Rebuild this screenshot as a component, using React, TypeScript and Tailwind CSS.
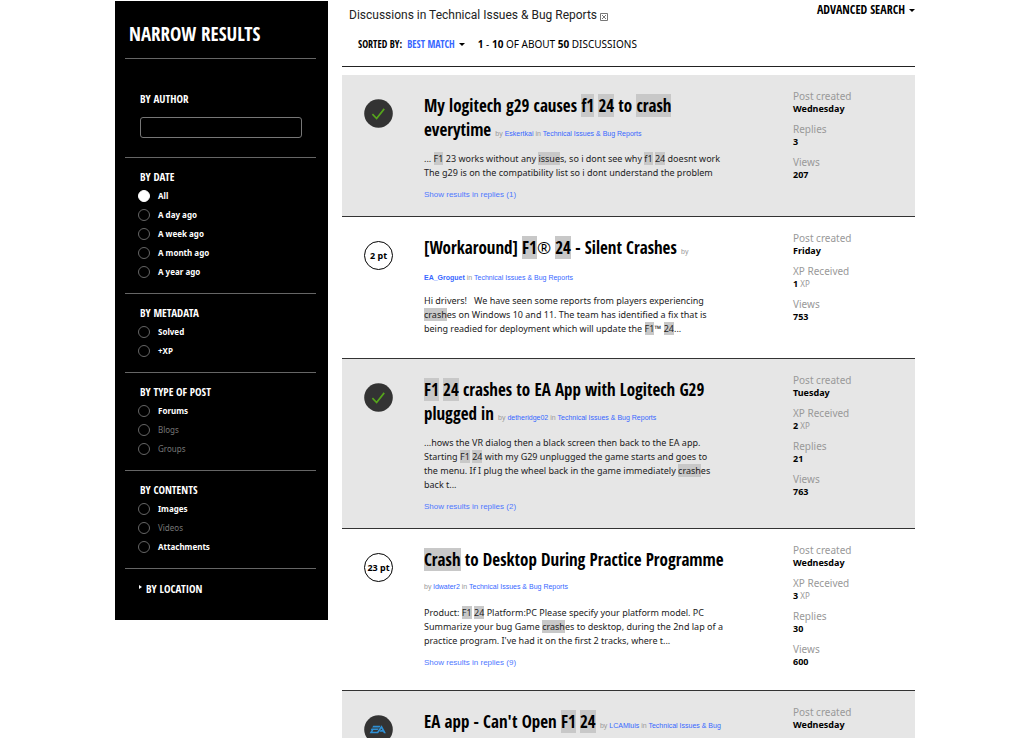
import type { ReactNode } from "react";

type Option = { label: string; disabled?: boolean; checked?: boolean };
type Filter = { title: string; name: string; options: Option[] };
type Stat = { label: string; value: string; unit?: string };
type Result = {
  id: number;
  badge: ReactNode;
  title: ReactNode;
  titleBreak?: boolean;
  byBreak?: boolean;
  author: string;
  staff?: boolean;
  board: string;
  excerpt?: ReactNode;
  replies?: number;
  stats: Stat[];
};

const filters: Filter[] = [
  {
    title: "By date",
    name: "date",
    options: [
      { label: "All", checked: true },
      { label: "A day ago" },
      { label: "A week ago" },
      { label: "A month ago" },
      { label: "A year ago" },
    ],
  },
  { title: "By metadata", name: "metadata", options: [{ label: "Solved" }, { label: "+XP" }] },
  {
    title: "By type of post",
    name: "type",
    options: [{ label: "Forums" }, { label: "Blogs", disabled: true }, { label: "Groups", disabled: true }],
  },
  {
    title: "By contents",
    name: "contents",
    options: [{ label: "Images" }, { label: "Videos", disabled: true }, { label: "Attachments" }],
  },
];

function Hit({ children }: { children: ReactNode }) {
  return <mark className="bg-[#c8c8c8] text-inherit">{children}</mark>;
}

function SolvedBadge() {
  return (
    <svg viewBox="0 0 29 29" className="size-[29px]" role="img" aria-label="Solved">
      <circle cx="14.5" cy="14.5" r="14.3" fill="#333" />
      <path d="M8.4 15.2l4.2 4.3 7.6-9.6" fill="none" stroke="#56a51c" strokeWidth="1.7" />
    </svg>
  );
}

function PointBadge({ points }: { points: number }) {
  return (
    <span className="flex size-[29px] items-center justify-center rounded-full border border-black bg-white text-[9px] font-bold whitespace-nowrap">
      {points} pt
    </span>
  );
}

function EaBadge() {
  return (
    <svg viewBox="0 0 29 29" className="size-[29px]" role="img" aria-label="EA">
      <circle cx="14.5" cy="14.5" r="14.3" fill="#333" />
      <path
        d="M9.2 10.8h7.3l-1 1.6H8.2zM7.5 13.5h7.2l-1 1.6H9.4l-1 1.6h4.8l4.4-6.4 4.3 8h-2l-.8-1.6h-3.5l1-1.6h1.6l-.8-1.5-3.3 4.7H5.6l2-3.2h-.8z"
        fill="#2f8fd3"
      />
    </svg>
  );
}

const board = "Technical Issues & Bug Reports";

const results: Result[] = [
  {
    id: 1,
    badge: <SolvedBadge />,
    title: <>My logitech g29 causes <Hit>f1</Hit> <Hit>24</Hit> to <Hit>crash</Hit><br />everytime</>,
    author: "Eskertkai",
    board,
    excerpt: (
      <>
        ... <Hit>F1</Hit> 23 works without any <Hit>issue</Hit>s, so i dont see why <Hit>f1</Hit> <Hit>24</Hit> doesnt work<br />
        The g29 is on the compatibility list so i dont understand the problem
      </>
    ),
    replies: 1,
    stats: [
      { label: "Post created", value: "Wednesday" },
      { label: "Replies", value: "3" },
      { label: "Views", value: "207" },
    ],
  },
  {
    id: 2,
    badge: <PointBadge points={2} />,
    title: <>[Workaround] <Hit>F1</Hit><span className="font-['Open_Sans','Liberation_Sans',sans-serif] font-normal">®</span> <Hit>24</Hit> - Silent Crashes</>,
    byBreak: true,
    author: "EA_Groguet",
    staff: true,
    board,
    excerpt: (
      <>
        Hi drivers! &nbsp; We have seen some reports from players experiencing<br />
        <Hit>crash</Hit>es on Windows 10 and 11. The team has identified a fix that is<br />
        being readied for deployment which will update the <Hit>F1</Hit>™ <Hit>24</Hit>...
      </>
    ),
    stats: [
      { label: "Post created", value: "Friday" },
      { label: "XP Received", value: "1", unit: "XP" },
      { label: "Views", value: "753" },
    ],
  },
  {
    id: 3,
    badge: <SolvedBadge />,
    title: <><Hit>F1</Hit> <Hit>24</Hit> crashes to EA App with Logitech G29<br />plugged in</>,
    author: "detheridge02",
    board,
    excerpt: (
      <>
        ...hows the VR dialog then a black screen then back to the EA app.<br />
        Starting <Hit>F1</Hit> <Hit>24</Hit> with my G29 unplugged the game starts and goes to<br />
        the menu. If I plug the wheel back in the game immediately <Hit>crash</Hit>es<br />
        back t...
      </>
    ),
    replies: 2,
    stats: [
      { label: "Post created", value: "Tuesday" },
      { label: "XP Received", value: "2", unit: "XP" },
      { label: "Replies", value: "21" },
      { label: "Views", value: "763" },
    ],
  },
  {
    id: 4,
    badge: <PointBadge points={23} />,
    title: <><Hit>Crash</Hit> to Desktop During Practice Programme</>,
    titleBreak: true,
    author: "ldwater2",
    board,
    excerpt: (
      <>
        Product: <Hit>F1</Hit> <Hit>24</Hit> Platform:PC Please specify your platform model. PC<br />
        Summarize your bug Game <Hit>crash</Hit>es to desktop, during the 2nd lap of a<br />
        practice program. I've had it on the first 2 tracks, where t...
      </>
    ),
    replies: 9,
    stats: [
      { label: "Post created", value: "Wednesday" },
      { label: "XP Received", value: "3", unit: "XP" },
      { label: "Replies", value: "30" },
      { label: "Views", value: "600" },
    ],
  },
  {
    id: 5,
    badge: <EaBadge />,
    title: <>EA app - Can't Open <Hit>F1</Hit> <Hit>24</Hit></>,
    author: "LCAMluis",
    board: "Technical Issues & Bug",
    stats: [{ label: "Post created", value: "Wednesday" }],
  },
];

function Caret() {
  return <span className="border-x-[3px] border-t-[3px] border-x-transparent border-t-black" />;
}

function FilterHeading({ children }: { children: ReactNode }) {
  return (
    <h3 className="font-['Open_Sans_Condensed','Liberation_Sans',sans-serif] text-[11px] leading-[18px] font-bold uppercase">
      {children}
    </h3>
  );
}

function Sidebar() {
  return (
    <aside className="mt-px w-[213px] shrink-0 self-start bg-black pr-[12px] pl-[10px] text-white">
      <h2 className="border-b border-[#666] pt-[18px] pb-[9px] pl-1 font-['Open_Sans_Condensed','Liberation_Sans',sans-serif] text-[19px] leading-[30px] font-bold">
        NARROW RESULTS
      </h2>
      <section className="pt-[31px] pr-[14px] pb-[19px] pl-[15px]">
        <label htmlFor="author" className="block font-['Open_Sans_Condensed','Liberation_Sans',sans-serif] text-[11px] leading-[18px] font-bold uppercase">
          By author
        </label>
        <input id="author" type="text" className="mt-[9px] block h-[21px] w-full rounded-[3px] border border-[#777] bg-black px-1 text-[9px]" />
      </section>
      {filters.map((f) => (
        <section key={f.name} className="border-t border-[#666] px-[15px] pt-[10px] pb-[12px]">
          <FilterHeading>{f.title}</FilterHeading>
          {f.options.map((o) => (
            <label
              key={o.label}
              className={o.disabled ? "flex h-[19px] items-center gap-2 text-[8px] text-[#777]" : "flex h-[19px] items-center gap-2 text-[8px] font-bold"}
            >
              <input
                type="radio"
                name={f.name}
                defaultChecked={o.checked}
                disabled={o.disabled}
                className="-ml-0.5 size-3 appearance-none rounded-full border border-[#666] checked:border-white checked:bg-white"
              />
              {o.label}
            </label>
          ))}
        </section>
      ))}
      <section className="border-t border-[#666] px-[14px] pt-[11px] pb-[22px]">
        <button className="flex items-center gap-1">
          <span className="mb-1 border-y-2 border-l-[3px] border-y-transparent border-l-white" />
          <FilterHeading>By location</FilterHeading>
        </button>
      </section>
    </aside>
  );
}

function ResultRow({ result }: { result: Result }) {
  return (
    <li className="flex min-h-[142px] border-b border-[#333] odd:bg-[#e6e6e6]">
      <div className="w-[82px] shrink-0 pt-[24px] pl-[22px]">{result.badge}</div>
      <div className="flex-1 pt-[19px] pb-[15px] whitespace-nowrap">
        <div className="h-[46px] leading-[23px]">
          <h2 className="inline font-['Open_Sans_Condensed','Liberation_Sans',sans-serif] text-[17px] font-bold">
            <a href="#">{result.title}</a>
          </h2>
          {result.titleBreak ? <br /> : " "}
          <span className="font-['Liberation_Sans',Arial,sans-serif] text-[7px] text-[#999]">
            by{result.byBreak ? <br /> : " "}
            <a href="#" className={result.staff ? "font-bold text-[#3767ff]" : "text-[#3767ff]"}>{result.author}</a> in{" "}
            <a href="#" className="text-[#3767ff]">{result.board}</a>
          </span>
        </div>
        {result.excerpt && <p className="mt-[12px] text-[9px] leading-[14px] text-[#222]">{result.excerpt}</p>}
        {result.replies && (
          <a href="#" className="mt-[9px] block font-['Liberation_Sans',Arial,sans-serif] text-[8px] leading-[12px] text-[#4f78ff]">
            Show results in replies ({result.replies})
          </a>
        )}
      </div>
      <dl className="flex w-[122px] shrink-0 flex-col gap-[8px] pt-[15px] pb-[22px]">
        {result.stats.map((s) => (
          <div key={s.label}>
            <dt className="text-[10px] leading-[13px] text-[#999]">{s.label}</dt>
            <dd className="text-[9px] leading-[12px] font-bold">
              {s.value}
              {s.unit && <span className="text-[8px] font-normal text-[#999]"> {s.unit}</span>}
            </dd>
          </div>
        ))}
      </dl>
    </li>
  );
}

export default function App() {
  return (
    <div className="flex gap-[14px] bg-white pr-[109px] pl-[115px] font-['Noto_Sans','Liberation_Sans',sans-serif] text-black">
      <Sidebar />
      <main className="min-w-0 flex-1">
        <header className="border-b border-[#222] pb-[13px]">
          <div className="flex justify-between pl-[7px]">
            <h1 className="flex items-center gap-[3px] pt-[6px] font-['Roboto','Liberation_Sans',sans-serif] text-[12px] leading-[18px] text-[#222]">
              Discussions in Technical Issues & Bug Reports
              <button aria-label="Remove filter" className="mt-1">
                <svg viewBox="0 0 8 8" className="size-2" fill="none" stroke="#777">
                  <path d="M.5.5h7v7h-7zM2 2l4 4M6 2l-4 4" />
                </svg>
              </button>
            </h1>
            <button className="flex h-[20px] items-center gap-1 font-['Open_Sans_Condensed','Liberation_Sans',sans-serif] text-[12px] font-bold">
              ADVANCED SEARCH <Caret />
            </button>
          </div>
          <div className="mt-[11px] flex h-[18px] items-center pl-4 text-[10px]">
            <span className="mr-[5px] font-['Open_Sans_Condensed','Liberation_Sans',sans-serif] font-bold">SORTED BY:</span>
            <button className="mr-[13px] flex items-center gap-1 font-['Open_Sans_Condensed','Liberation_Sans',sans-serif] font-bold text-[#3767ff]">
              BEST MATCH <Caret />
            </button>
            <p><b>1</b> - <b>10</b> OF ABOUT <b>50</b> DISCUSSIONS</p>
          </div>
        </header>
        <ul className="mt-2">
          {results.map((r) => <ResultRow key={r.id} result={r} />)}
        </ul>
      </main>
    </div>
  );
}
